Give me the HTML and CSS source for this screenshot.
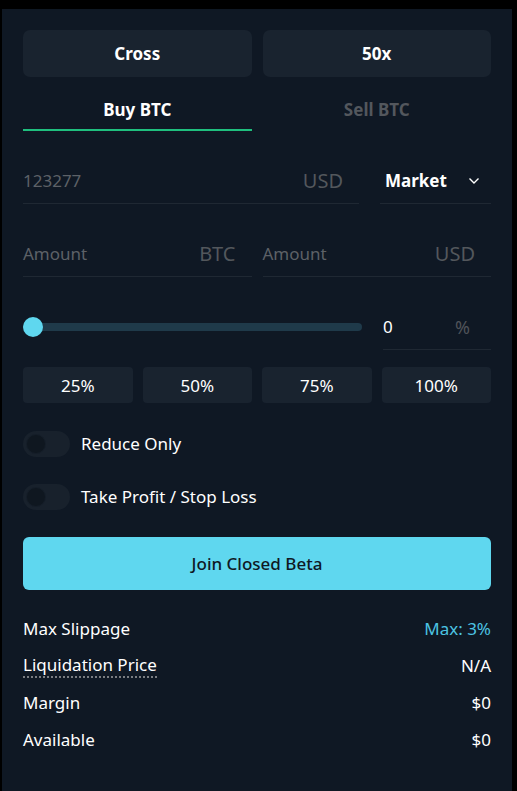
FILE: index.html
```html
<!DOCTYPE html>
<html>
<head>
<meta charset="utf-8">
<link rel="stylesheet" href="styles.css">
</head>
<body>
<div class="panel">
  <div class="pair">
    <button class="mode-btn">Cross</button>
    <button class="mode-btn">50x</button>
  </div>
  <div class="pair tabs">
    <div class="tab active">Buy BTC</div>
    <div class="tab">Sell BTC</div>
  </div>
  <div class="price-row">
    <div class="field"><span class="ph">123277</span><span class="unit">USD</span></div>
    <div class="field select"><span class="sel-text">Market</span>
      <svg class="chev" width="12" height="8" viewBox="0 0 12 8"><polyline points="1.5,1.5 6,6 10.5,1.5" fill="none" stroke="#ffffff" stroke-width="1.4"/></svg>
    </div>
  </div>
  <div class="pair amount-row">
    <div class="field"><span class="ph">Amount</span><span class="unit">BTC</span></div>
    <div class="field"><span class="ph">Amount</span><span class="unit">USD</span></div>
  </div>
  <div class="slider-row">
    <div class="slider"><div class="track"></div><div class="thumb"></div></div>
    <div class="field pct"><span class="val">0</span><span class="unit">%</span></div>
  </div>
  <div class="quick">
    <button class="q-btn">25%</button>
    <button class="q-btn">50%</button>
    <button class="q-btn">75%</button>
    <button class="q-btn">100%</button>
  </div>
  <div class="toggle-row"><span class="toggle"><span class="knob"></span></span><span class="label">Reduce Only</span></div>
  <div class="toggle-row"><span class="toggle"><span class="knob"></span></span><span class="label">Take Profit / Stop Loss</span></div>
  <button class="cta">Join Closed Beta</button>
  <div class="info">
    <div class="info-row"><span>Max Slippage</span><span class="accent">Max: 3%</span></div>
    <div class="info-row"><span class="dotted">Liquidation Price</span><span>N/A</span></div>
    <div class="info-row"><span>Margin</span><span>$0</span></div>
    <div class="info-row"><span>Available</span><span>$0</span></div>
  </div>
</div>
</body>
</html>
```
FILE: styles.css
```css
* { box-sizing: border-box; }
html, body { margin: 0; padding: 0; background: #000; }
body {
  font-family: "Noto Sans", "Open Sans", sans-serif;
  font-size: 17px;
  color: #ffffff;
  padding: 9px 5px 0 2px;
}
.panel {
  width: 510px;
  height: 782px;
  background: #0f1824;
  padding: 21px 21px 0 21px;
  display: flex;
  flex-direction: column;
}
button { font-family: inherit; border: none; cursor: pointer; }
.pair {
  display: grid;
  grid-template-columns: 1fr 1fr;
  column-gap: 11px;
}
.mode-btn {
  height: 47px;
  border-radius: 7px;
  background: #19232f;
  color: #fff;
  font-size: 17px;
  font-weight: 700;
}
.tabs { height: 54px; }
.tab {
  padding-top: 21px;
  line-height: 24px;
  text-align: center;
  font-weight: 700;
  color: #53575d;
  border-bottom: 2px solid transparent;
}
.tab.active { color: #fff; border-bottom-color: #1fbf7e; }
.field {
  display: flex;
  justify-content: space-between;
  align-items: center;
  line-height: 24px;
  height: 35px;
  padding: 0 16px 10px 0;
  border-bottom: 1px solid #1f2833;
}
.ph { color: #5d6167; }
.unit { color: #53575c; font-size: 20px; }
.price-row {
  margin-top: 38px;
  display: grid;
  grid-template-columns: 1fr 111px;
  column-gap: 21px;
}
.select { padding-left: 5px; padding-right: 11px; }
.sel-text { font-weight: 700; }
.amount-row { margin-top: 38px; }
.slider-row {
  margin-top: 38px;
  display: grid;
  grid-template-columns: 1fr 108px;
  column-gap: 21px;
  align-items: start;
}
.slider { position: relative; height: 24px; }
.track {
  position: absolute; left: 0; right: 0; top: 8px;
  height: 8px; border-radius: 4px; background: #1f3a4a;
}
.thumb {
  position: absolute; left: 0; top: 2px;
  width: 20px; height: 20px; border-radius: 50%;
  background: #5fd7ef;
}
.pct { padding-right: 21px; }
.pct .unit { color: #4f5359; font-size: 18px; }
.val { color: #fff; }
.quick {
  margin-top: 17px;
  display: grid;
  grid-template-columns: repeat(4, 1fr);
  column-gap: 10px;
}
.q-btn {
  height: 36px;
  border-radius: 4px;
  background: #19232f;
  color: #fff;
  font-size: 17px;
}
.toggle-row {
  display: flex;
  align-items: center;
  gap: 11px;
  margin-top: 28px;
  height: 26px;
}
.toggle-row + .toggle-row { margin-top: 27px; }
.toggle {
  width: 47px; height: 26px; border-radius: 13px;
  background: #18212c;
  display: flex; align-items: center; padding-left: 3px;
}
.knob { width: 20px; height: 20px; border-radius: 50%; background: #0f1720; border: 1px solid #151e29; }
.label { line-height: 24px; }
.cta {
  margin-top: 27px;
  height: 53px;
  border-radius: 6px;
  background: #5fd7ef;
  color: #0f1824;
  font-size: 17px;
  font-weight: 500;
}
.info {
  margin-top: 27px;
  display: flex;
  flex-direction: column;
  gap: 13px;
}
.info-row {
  display: flex;
  justify-content: space-between;
  line-height: 24px;
}
.accent { color: #4cc3e2; }
.dotted { border-bottom: 2px dotted #7a7d82; line-height: 22px; }
```
